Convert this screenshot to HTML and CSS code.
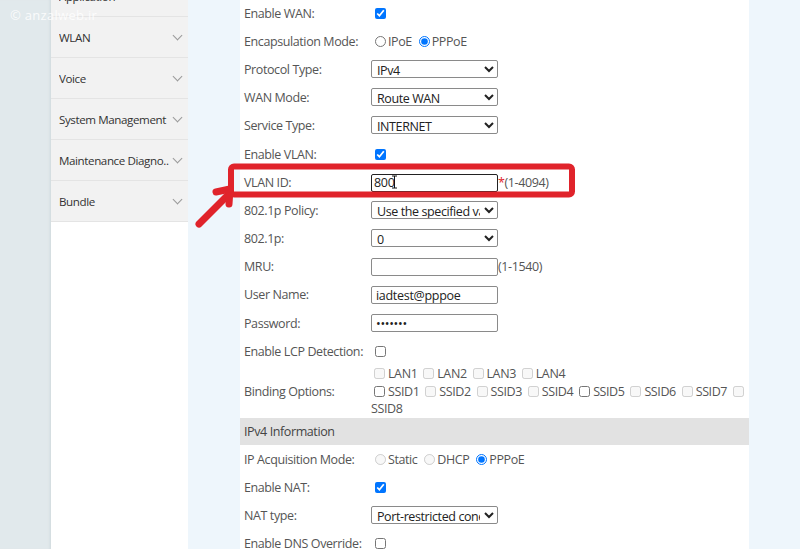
FILE: index.html
```html
<!DOCTYPE html>
<html lang="en">
<head>
    <meta charset="UTF-8">
    <title>WAN Configuration</title>
    <link rel="stylesheet" href="styles.css">
</head>
<body>
    <div class="page">
        <div class="rail"></div>
        <!-- menu -->
        <div class="sidebar">
            <ul class="menu">
                <li><span class="name">Application</span><span class="chev"></span></li>
                <li><span class="name">WLAN</span><span class="chev"></span></li>
                <li><span class="name">Voice</span><span class="chev"></span></li>
                <li><span class="name">System Management</span><span class="chev"></span></li>
                <li><span class="name">Maintenance Diagno..</span><span class="chev"></span></li>
                <li><span class="name">Bundle</span><span class="chev"></span></li>
            </ul>
        </div>
        <div class="gap"></div>
        <!-- form -->
        <div class="content">
            <table class="form">
                <colgroup><col class="c1"><col></colgroup>
                <tr><td class="lbl">Enable WAN:</td><td><input type="checkbox" class="chk" checked></td></tr>
                <tr><td class="lbl">Encapsulation Mode:</td><td><label class="opt"><input type="radio" name="enc">IPoE</label> <label class="opt"><input type="radio" name="enc" checked>PPPoE</label></td></tr>
                <tr><td class="lbl">Protocol Type:</td><td><select><option>IPv4</option></select></td></tr>
                <tr><td class="lbl">WAN Mode:</td><td><select><option>Route WAN</option></select></td></tr>
                <tr><td class="lbl">Service Type:</td><td><select><option>INTERNET</option></select></td></tr>
                <tr><td class="lbl">Enable VLAN:</td><td><input type="checkbox" class="chk" checked></td></tr>
                <tr><td class="lbl">VLAN ID:</td><td><span class="field"><input type="text" class="txt active" value="800"><svg class="ibeam" width="7" height="14" viewBox="0 0 7 14"><path d="M1 1h5M3.5 1v12M1 13h5" stroke="#111" stroke-width="1" fill="none"/></svg></span><span class="req">*</span><span class="hint">(1-4094)</span></td></tr>
                <tr><td class="lbl">802.1p Policy:</td><td><select><option>Use the specified value</option></select></td></tr>
                <tr><td class="lbl">802.1p:</td><td><select><option>0</option></select></td></tr>
                <tr><td class="lbl">MRU:</td><td><input type="text" class="txt"><span class="hint">(1-1540)</span></td></tr>
                <tr><td class="lbl">User Name:</td><td><input type="text" class="txt" value="iadtest@pppoe"></td></tr>
                <tr><td class="lbl">Password:</td><td><input type="password" class="txt" value="1234567"></td></tr>
                <tr><td class="lbl">Enable LCP Detection:</td><td><input type="checkbox" class="chk"></td></tr>
                <tr class="bind">
                    <td class="lbl">Binding Options:</td>
                    <td class="ports">
                        <label class="opt"><input type="checkbox" class="chk" disabled>LAN1</label>
                        <label class="opt"><input type="checkbox" class="chk" disabled>LAN2</label>
                        <label class="opt"><input type="checkbox" class="chk" disabled>LAN3</label>
                        <label class="opt"><input type="checkbox" class="chk" disabled>LAN4</label><br>
                        <label class="opt"><input type="checkbox" class="chk">SSID1</label>
                        <label class="opt"><input type="checkbox" class="chk" disabled>SSID2</label>
                        <label class="opt"><input type="checkbox" class="chk" disabled>SSID3</label>
                        <label class="opt"><input type="checkbox" class="chk" disabled>SSID4</label>
                        <label class="opt"><input type="checkbox" class="chk">SSID5</label>
                        <label class="opt"><input type="checkbox" class="chk" disabled>SSID6</label>
                        <label class="opt"><input type="checkbox" class="chk" disabled>SSID7</label>
                        <input type="checkbox" class="chk" disabled><br>SSID8
                    </td>
                </tr>
                <tr class="head"><td colspan="2">IPv4 Information</td></tr>
                <tr><td class="lbl">IP Acquisition Mode:</td><td><label class="opt"><input type="radio" name="ip" disabled>Static</label> <label class="opt"><input type="radio" name="ip" disabled>DHCP</label> <label class="opt"><input type="radio" name="ip" checked>PPPoE</label></td></tr>
                <tr><td class="lbl">Enable NAT:</td><td><input type="checkbox" class="chk" checked></td></tr>
                <tr><td class="lbl">NAT type:</td><td><select><option>Port-restricted cone NAT</option></select></td></tr>
                <tr><td class="lbl">Enable DNS Override:</td><td><input type="checkbox" class="chk"></td></tr>
            </table>
        </div>
    </div>

    <div class="watermark">&copy; anzalweb.ir</div>

    <!-- red annotation -->
    <svg class="mark" width="600" height="240" viewBox="0 0 600 240">
        <rect x="231" y="166.5" width="341" height="28" rx="3" fill="none" stroke="#e0232b" stroke-width="6"/>
        <path d="M199 224L228 195" stroke="#e0232b" stroke-width="7" stroke-linecap="round" fill="none"/>
        <path d="M216 192L230 189L229 204" stroke="#e0232b" stroke-width="7" stroke-linecap="round" stroke-linejoin="round" fill="none"/>
    </svg>
</body>
</html>
```

FILE: styles.css
```css
*{
    margin: 0;
    padding: 0;
    box-sizing: border-box;
}
body{
    background-color: #eef6fc;
    font-family: "Open Sans", "Noto Sans", sans-serif;
    font-size: 12.5px;
    letter-spacing: -0.4px;
    color: #555;
    overflow: hidden;
}
.page{
    display: flex;
    height: 549px;
    overflow: hidden;
}
.rail{
    width: 51px;
    background-color: #e1e9ec;
    box-shadow: inset -3px 0 3px -2px #cfd8dc;
}
.sidebar{
    width: 137px;
    background-color: #fff;
}
.menu{
    list-style: none;
    margin-top: -24px;
}
.menu li{
    height: 41px;
    display: flex;
    align-items: center;
    padding: 0 5px 0 8px;
    background-color: #f2f2f2;
    border-bottom: 1px solid #e4e4e4;
    color: #333;
    font-size: 11.6px;
    letter-spacing: -0.4px;
    white-space: nowrap;
}
.menu .name{
    flex: 1;
    overflow: hidden;
}
/* 下箭头 */
.chev{
    flex-shrink: 0;
    width: 7px;
    height: 7px;
    margin: -4px 2px 0 4px;
    border-right: 1.5px solid #9a9a9a;
    border-bottom: 1.5px solid #9a9a9a;
    transform: rotate(45deg);
}
.gap{
    width: 52px;
}
.content{
    width: 509px;
    background-color: #fff;
    margin-top: -1px;
}
.form{
    width: 100%;
    border-collapse: collapse;
    table-layout: fixed;
}
.form .c1{
    width: 131px;
}
.form td{
    height: 28.2px;
    padding: 0;
    vertical-align: middle;
    white-space: nowrap;
}
.form td.lbl{
    padding-left: 4px;
}
.chk{
    width: 11px;
    height: 11px;
    margin: 0 2px 0 4px;
    vertical-align: -1px;
}
.opt input[type=radio]{
    width: 11px;
    height: 11px;
    margin: 0 2px 0 4px;
    vertical-align: -1px;
}
.ports .chk{
    margin: 0 3px 0 3px;
}
select{
    width: 127px;
    height: 18px;
    font-family: inherit;
    font-size: 12.5px;
    letter-spacing: -0.4px;
    color: #222;
    border: 1px solid #8a8a8a;
    border-radius: 2px;
    background-color: #fff;
    padding: 0 1px;
}
.txt{
    width: 127px;
    height: 18px;
    font-family: inherit;
    font-size: 12.5px;
    letter-spacing: -0.3px;
    color: #222;
    border: 1px solid #8a8a8a;
    border-radius: 2px;
    padding: 0 4px;
    vertical-align: middle;
}
.txt.active{
    border-color: #222;
    padding-left: 2px;
}
.field{
    position: relative;
    display: inline-block;
    vertical-align: middle;
}
.ibeam{
    position: absolute;
    left: 20px;
    top: 2px;
}
.hint{
    vertical-align: middle;
}
.req{
    color: #e0232b;
    vertical-align: middle;
}
.form tr.bind td{
    height: 52px;
    line-height: 17.5px;
}
.form td.ports{
    padding: 0;
}
.form tr.head td{
    height: 27px;
    background-color: #e2e2e2;
    padding-left: 4px;
    color: #444;
}
.watermark{
    position: absolute;
    left: 10px;
    top: 6px;
    color: #fff;
    opacity: 0.85;
    font-size: 13px;
    letter-spacing: 0.3px;
}
.mark{
    position: absolute;
    left: 0;
    top: 0;
}
```
